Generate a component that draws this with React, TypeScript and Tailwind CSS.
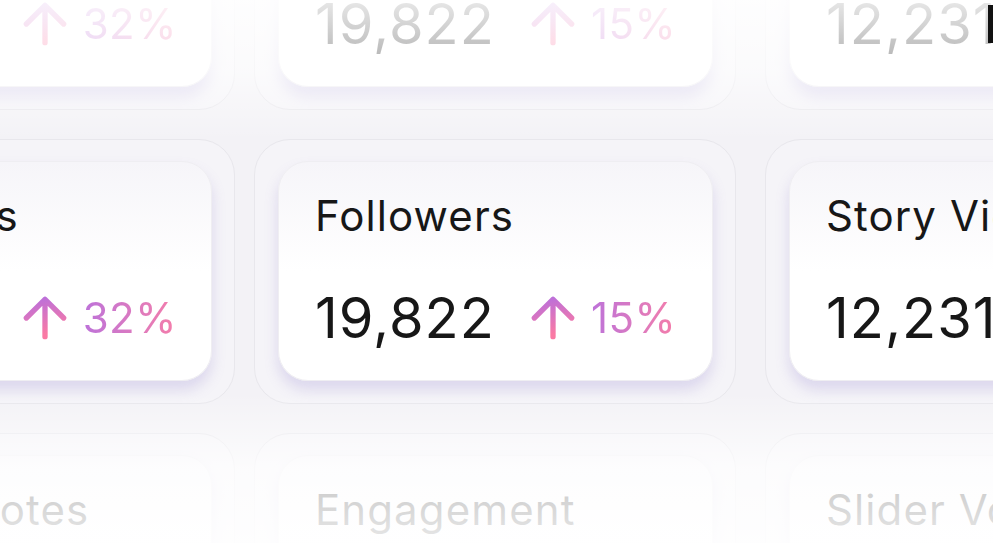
import { useId } from "react";

type Stat = {
  title: string;
  value: string;
  change: string;
};

const rows: Stat[][] = [
  [
    { title: "Reactions", value: "11,482", change: "32%" },
    { title: "Followers", value: "19,822", change: "15%" },
    { title: "Story Views", value: "12,231", change: "9%" },
  ],
  [
    { title: "Reactions", value: "11,482", change: "32%" },
    { title: "Followers", value: "19,822", change: "15%" },
    { title: "Story Views", value: "12,231", change: "9%" },
  ],
  [
    { title: "Sticker Votes", value: "4,120", change: "11%" },
    { title: "Engagement", value: "8,914", change: "21%" },
    { title: "Slider Votes", value: "2,087", change: "6%" },
  ],
];

function ArrowUp() {
  const id = useId();
  return (
    <svg width="64" height="64" viewBox="0 0 24 24" fill="none" className="shrink-0">
      <defs>
        <linearGradient id={id} x1="0" y1="0" x2="0.25" y2="1">
          <stop offset="0%" stopColor="#b86fdd" />
          <stop offset="100%" stopColor="#fa7aa4" />
        </linearGradient>
      </defs>
      <path
        d="m5 12 7-7 7 7M12 19V5"
        stroke={`url(#${id})`}
        strokeWidth="2"
        strokeLinecap="round"
        strokeLinejoin="round"
      />
    </svg>
  );
}

function StatCard({ stat, className = "" }: { stat: Stat; className?: string }) {
  return (
    <div
      className={`h-[265px] w-[482px] shrink-0 rounded-[36px] border border-[#e8e7ec] bg-[#f5f4f8] pt-[21px] pl-[23px] pr-[22px] ${className}`}
    >
      <div className="flex h-[220px] flex-col rounded-[30px] border border-[#efeef2] bg-linear-to-b from-[#f6f5f9] via-white to-white pt-[29px] pl-[36px] shadow-[0_9px_14px_rgba(130,115,200,0.22)]">
        <div className="whitespace-nowrap text-[42px] leading-[50px] tracking-[1.1px] text-[#171717]">
          {stat.title}
        </div>
        <div className="mt-[45px] flex h-[64px] items-center">
          <span className="whitespace-nowrap text-[56px] leading-none tracking-[1px] text-[#171717]">
            {stat.value}
          </span>
          <div className="ml-[26px] flex items-center gap-[6px]">
            <ArrowUp />
            <span className="bg-linear-to-r from-[#bd72d9] to-[#f57da9] bg-clip-text text-[42px] leading-none tracking-[0.5px] text-transparent">
              {stat.change}
            </span>
          </div>
        </div>
      </div>
    </div>
  );
}

export default function App() {
  return (
    <div
      className="relative h-[543px] w-[993px] overflow-hidden bg-[#f3f2f6]"
      style={{ fontFamily: "Inter, 'Noto Sans', sans-serif" }}
    >
      <div className="ml-[-247px] mt-[-155px] flex flex-col gap-[29px]">
        {rows.map((row, i) => (
          <div key={i} className="flex">
            <StatCard stat={row[0]} />
            <StatCard stat={row[1]} className="ml-[19px]" />
            <StatCard stat={row[2]} className="ml-[29px]" />
          </div>
        ))}
      </div>

      {/* soft fades at the top and bottom edges */}
      <div className="pointer-events-none absolute inset-x-0 top-0 h-[140px] bg-linear-to-b from-white/90 via-white/65 to-transparent" />
      <div className="pointer-events-none absolute inset-x-0 bottom-0 h-[150px] bg-linear-to-b from-transparent via-white/75 to-white/90" />

      <div className="absolute right-0 top-[5px] h-[38px] w-[5px] bg-[#111]" />
    </div>
  );
}
